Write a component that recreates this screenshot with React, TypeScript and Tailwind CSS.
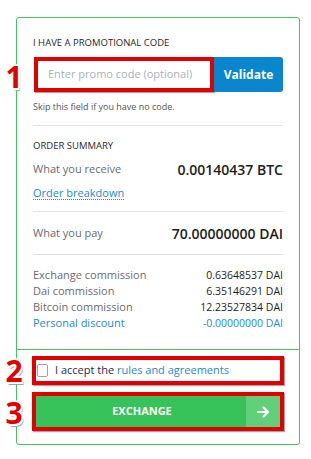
import React from "react";

const numCls =
  "absolute left-[4px] w-[20px] text-center text-[30px] leading-[30px] font-bold text-[#e10000] [font-family:'Open_Sans',sans-serif] [text-shadow:2px_0_0_#fff,-2px_0_0_#fff,0_2px_0_#fff,0_-2px_0_#fff,1.5px_1.5px_0_#fff,-1.5px_-1.5px_0_#fff,1.5px_-1.5px_0_#fff,-1.5px_1.5px_0_#fff,2px_3px_1px_#9a9a9a]";

function Row({ label, value, blue }: { label: string; value: string; blue?: boolean }) {
  return (
    <div className="flex justify-between h-[16px] leading-[16px] text-[11px]">
      <span className={blue ? "text-[#1b8ad3]" : "text-[#6b6b6b]"}>{label}</span>
      <span className={blue ? "text-[#1b8ad3] text-[10.5px]" : "text-[#1e1e1e] text-[10.5px] font-medium"}>{value}</span>
    </div>
  );
}

export default function App() {
  return (
    <div className="relative min-h-[459px] w-[311px] bg-white [font-family:'Open_Sans',sans-serif] overflow-hidden">
      <div className="pt-[17px] pl-[16px]">
        <div className="w-[284px] h-[428px] border border-[#45c45f] rounded-[3px] flex flex-col">
          <div className="px-[16px] pt-[19px]">
            <div className="text-[9.5px] leading-[12px] text-[#1f1f2e]">I HAVE A PROMOTIONAL CODE</div>
            <div className="mt-[8px] flex h-[35px]">
              <div className="ml-[1px] w-[180px] h-[35px] border-[4px] border-[#e00000] bg-white flex items-center pl-[10px] shadow-[1px_1px_1px_rgba(0,0,0,0.35)]">
                <span className="text-[11px] text-[#a9b1ba]">Enter promo code (optional)</span>
              </div>
              <div className="flex-1 h-[35px] bg-[#0a86ce] rounded-r-[3px] flex items-center justify-center text-white font-bold text-[12px]">
                Validate
              </div>
            </div>
            <div className="mt-[9px] text-[9px] leading-[12px] text-[#555]">Skip this field if you have no code.</div>
            <div className="mt-[12px] border-t border-[#e3e3e3]" />
            <div className="mt-[14px] text-[9.5px] leading-[12px] text-[#1f1f2e]">ORDER SUMMARY</div>
            <div className="mt-[8px] flex justify-between items-center h-[18px]">
              <span className="text-[11px] text-[#6b6b6b]">What you receive</span>
              <span className="text-[14px] font-semibold text-[#1e1e1e]">0.00140437 BTC</span>
            </div>
            <div className="mt-[6px] h-[15px] leading-[14px]">
              <span className="text-[11px] text-[#1b8ad3] border-b border-dotted border-[#1b8ad3] inline-block leading-[13px]">Order breakdown</span>
            </div>
            <div className="mt-[12px] border-t border-[#e3e3e3]" />
            <div className="mt-[12px] flex justify-between items-center h-[18px]">
              <span className="text-[11px] text-[#6b6b6b]">What you pay</span>
              <span className="text-[14px] font-semibold text-[#1e1e1e]">70.00000000 DAI</span>
            </div>
            <div className="mt-[12px] border-t border-[#e3e3e3]" />
            <div className="mt-[12px] flex flex-col">
              <Row label="Exchange commission" value="0.63648537 DAI" />
              <Row label="Dai commission" value="6.35146291 DAI" />
              <Row label="Bitcoin commission" value="12.23527834 DAI" />
              <Row label="Personal discount" value="-0.00000000 DAI" blue />
            </div>
          </div>
          <div className="mt-auto border-t border-[#45c45f] px-[15px] pt-[6px] pb-[13px] flex flex-col gap-[7px]">
            <div className="h-[29px] border-[4px] border-[#e00000] flex items-center gap-[7px] pl-[1px] shadow-[1px_1px_1px_rgba(0,0,0,0.35)]">
              <span className="w-[11px] h-[13px] border border-[#9aa3ab] rounded-[2px] bg-white" />
              <span className="text-[11px] text-[#2a2a4a]">
                I accept the <span className="text-[#1b8ad3]">rules and agreements</span>
              </span>
            </div>
            <div className="h-[39px] border-[4px] border-[#e00000] flex shadow-[1px_1px_1px_rgba(0,0,0,0.35)]">
              <div className="flex-1 bg-[#37c35a] flex items-center justify-center text-white font-bold text-[11px] pl-[2px]">
                EXCHANGE
              </div>
              <div className="w-[34px] bg-[#62d07a] flex items-center justify-center">
                <svg width="14" height="14" viewBox="0 0 14 14" fill="none" stroke="white" strokeWidth="2.2" strokeLinecap="round" strokeLinejoin="round">
                  <path d="M2 7h10M7.5 2.5L12 7l-4.5 4.5" />
                </svg>
              </div>
            </div>
          </div>
        </div>
      </div>
      <div className={numCls + " top-[62px]"}>1</div>
      <div className={numCls + " top-[356px]"}>2</div>
      <div className={numCls + " top-[398px]"}>3</div>
    </div>
  );
}
